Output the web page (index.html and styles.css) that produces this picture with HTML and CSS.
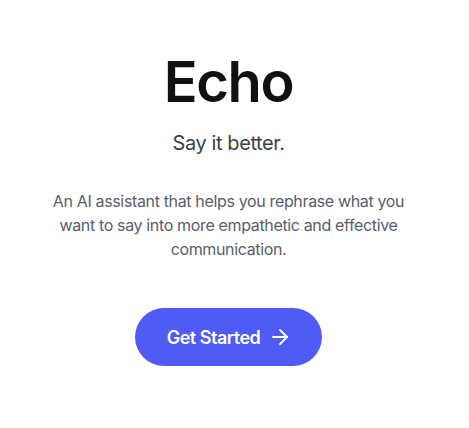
FILE: index.html
```html
<!DOCTYPE html>
<html lang="en">
<head>
<meta charset="utf-8">
<title>Echo</title>
<link rel="stylesheet" href="styles.css">
</head>
<body>
<main class="hero">
  <h1 class="title">Echo</h1>
  <p class="tagline">Say it better.</p>
  <p class="description">An AI assistant that helps you rephrase what you want to say into more empathetic and effective communication.</p>
  <a class="cta" href="#">
    <span>Get Started</span>
    <svg class="cta-icon" viewBox="0 0 24 24" width="24" height="24" fill="none" stroke="currentColor" stroke-width="1.8" stroke-linecap="round" stroke-linejoin="round"><path d="M5 12h14"/><path d="M12 5l7 7-7 7"/></svg>
  </a>
</main>
</body>
</html>
```

FILE: styles.css
```css
* { box-sizing: border-box; }
html, body { margin: 0; background: #ffffff; }
body {
  font-family: Inter, "Noto Sans", "Liberation Sans", sans-serif;
  -webkit-font-smoothing: antialiased;
}
.hero {
  display: flex;
  flex-direction: column;
  align-items: center;
  text-align: center;
  padding: 54px 28px 0 16px;
}
.title {
  margin: 0;
  font-size: 56px;
  line-height: 1;
  font-weight: 600;
  color: #111111;
  letter-spacing: -0.025em;
}
.tagline {
  margin: 19px 0 0;
  font-size: 20px;
  line-height: 28px;
  letter-spacing: -0.02em;
  color: #383f4c;
}
.description {
  margin: 32px 0 0;
  max-width: 370px;
  font-size: 16px;
  line-height: 24px;
  letter-spacing: -0.35px;
  color: #575e6a;
}
.cta {
  margin-top: 47px;
  display: inline-flex;
  align-items: center;
  gap: 8px;
  height: 58px;
  padding: 0 30px 0 32px;
  border-radius: 999px;
  background: #4e5bf4;
  color: #ffffff;
  font-size: 18px;
  font-weight: 600;
  letter-spacing: -0.5px;
  text-decoration: none;
}
.cta-icon { display: block; }
```
